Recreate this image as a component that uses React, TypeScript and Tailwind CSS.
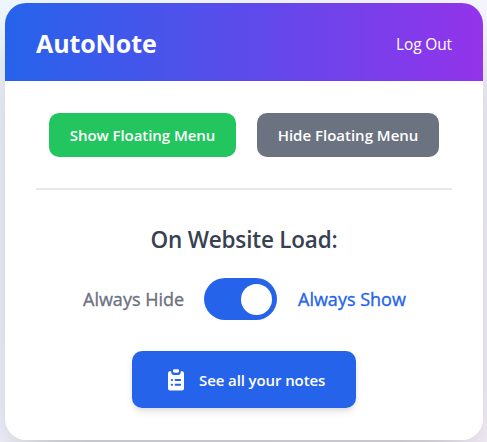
import React from "react";

function ClipboardIcon() {
  return (
    <svg width="16" height="22" viewBox="0 0 16 22" fill="none" aria-hidden="true">
      <path d="M2 2.2h1.2C3.2 4.9 4.2 5.9 6 5.9h4c1.8 0 2.8-1 2.8-3.7H14a2 2 0 0 1 2 2v15.2a2 2 0 0 1-2 2H2a2 2 0 0 1-2-2V4.2a2 2 0 0 1 2-2Z" fill="white" />
      <rect x="5" y="0.3" width="6" height="3.4" rx="1.4" fill="white" />
      <g stroke="#2563eb" strokeWidth="1.9" strokeLinecap="round">
        <path d="M3.7 11h.4M7.6 11h4.6M3.7 15.8h.4M7.6 15.8h4.6" />
      </g>
    </svg>
  );
}

export default function App() {
  return (
    <main className="h-[442px] w-[487px] overflow-hidden bg-linear-to-br/srgb from-[#eff6ff] to-[#faf5ff] pt-[3px] pl-[5px] font-['Open_Sans','Noto_Sans',sans-serif]">
      <section className="h-[437px] w-[478px] overflow-hidden rounded-[21px] bg-white shadow-[0_32px_64px_-14px_rgba(0,0,0,0.28)]">
        <header className="flex h-[78px] items-center justify-between bg-linear-to-r/srgb from-[#2563eb] to-[#9333ea] pr-[31px] pl-[31px] text-white">
          <h1 className="whitespace-nowrap pt-px text-[25px] leading-8 font-bold tracking-[-0.1px]">AutoNote</h1>
          <button className="whitespace-nowrap pt-[3px] text-[15.5px] leading-5 tracking-[-0.15px]">Log Out</button>
        </header>
        <div className="px-[31px] pt-8">
          <div className="flex justify-center gap-[21px] text-[15px] font-semibold text-white">
            <button className="h-11 w-[187px] rounded-[10px] bg-[#22c55e] whitespace-nowrap tracking-[-0.05px]">Show Floating Menu</button>
            <button className="h-11 w-[182px] rounded-[10px] bg-[#6b7280] whitespace-nowrap">Hide Floating Menu</button>
          </div>
          <hr className="mt-[31px] border-t-2 border-[#e5e7eb]" />
          <h2 className="mt-[34px] text-center text-[22.5px] leading-8 font-semibold tracking-[-0.2px] text-[#374151]">On Website Load:</h2>
          <div className="mt-[22px] ml-[47px] flex h-[42px] items-center text-[18px] font-medium [-webkit-text-stroke:0.35px_currentColor]">
            <span className="w-[121px] whitespace-nowrap text-[#6b7280]">Always Hide</span>
            <button aria-label="Website load visibility" role="switch" aria-checked="true" className="flex h-[42px] w-[73px] items-center justify-end rounded-full bg-[#2563eb] pr-[5px]">
              <span className="size-[31px] rounded-full bg-white" />
            </button>
            <span className="ml-[21px] whitespace-nowrap text-[#2563eb]">Always Show</span>
          </div>
          <button className="mt-[31px] ml-24 flex h-[57px] w-56 items-center rounded-[10px] bg-[#2563eb] pl-9 text-[15px] font-semibold whitespace-nowrap text-white shadow-[0_5px_8px_-1px_rgba(0,0,0,0.1),0_2px_5px_-2px_rgba(0,0,0,0.1)]">
            <ClipboardIcon />
            <span className="ml-[15px] pt-0.5 tracking-[-0.1px]">See all your notes</span>
          </button>
        </div>
      </section>
    </main>
  );
}
